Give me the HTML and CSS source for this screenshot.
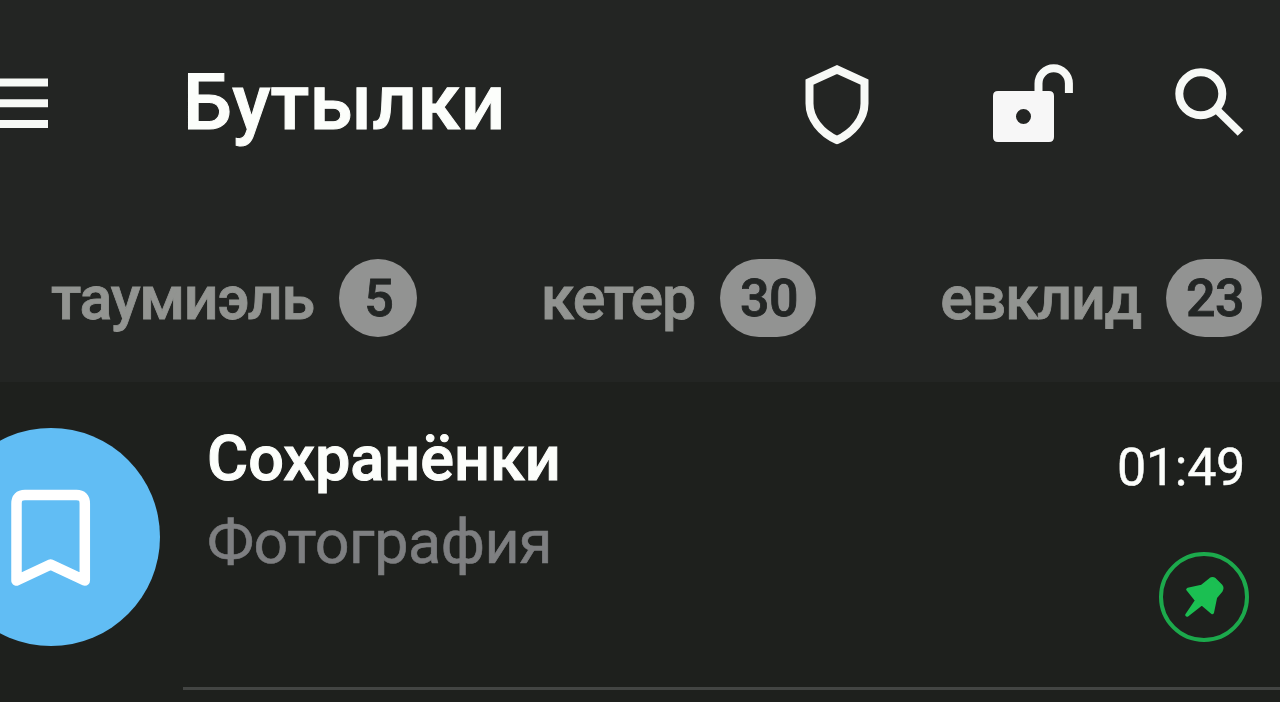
FILE: index.html
```
<!DOCTYPE html>
<html lang="ru">
<head>
  <meta charset="UTF-8">
  <title>Бутылки</title>
  <link rel="stylesheet" href="styles.css">
</head>
<body>

  <header class="topbar">
    <svg class="menu-icon" width="48" height="52" viewBox="0 0 48 52">
      <path d="M0 5.500H48M0 26.200H48M0 46.900H48"/>
    </svg>
    <h1>Бутылки</h1>
    <svg class="shield-icon" width="64" height="80" viewBox="0 0 64 80">
      <path d="M32 4.500L59.500 17V38.500C59.500 53.500 48 68 32 75C16 68 4.500 53.500 4.500 38.500V17Z"/>
    </svg>
    <svg class="lock-icon" width="82" height="80" viewBox="0 0 82 80">
      <path class="shackle" d="M46.500 32V19.500A15.200 15.200 0 0 1 76.900 19.500V29"/>
      <path class="body" fill-rule="evenodd" d="M5 27H57Q62 27 62 32V73Q62 78 57 78H6Q1 78 1 73V32Q1 27 6 27ZM31.500 45A7.500 7.500 0 1 0 31.500 60A7.500 7.500 0 1 0 31.500 45Z"/>
    </svg>
    <svg class="search-icon" width="70" height="70" viewBox="0 0 70 70">
      <circle cx="26.800" cy="25.800" r="21.500"/>
      <path d="M42.500 41.500L66.500 65"/>
    </svg>
  </header>

  <nav class="tabs">
    <div class="tab">таумиэль <span class="count">5</span></div>
    <div class="tab">кетер <span class="count">30</span></div>
    <div class="tab">евклид <span class="count">23</span></div>
  </nav>

  <main class="chat">
    <div class="avatar">
      <svg width="80" height="98" viewBox="0 0 80 98">
        <path d="M14 7H65.500Q73.800 7 73.800 15.500V92.500L39.600 76.500L5.500 92.500V15.500Q5.500 7 14 7Z"/>
      </svg>
    </div>
    <div class="content">
      <div class="text">
        <div class="name">Сохранёнки</div>
        <div class="message">Фотография</div>
      </div>
      <div class="info">
        <div class="time">01:49</div>
        <div class="pin">
          <svg width="40" height="42" viewBox="0 0 40 42">
            <path d="M4 13.500L17.700 10.500L26.500 3.500Q28.500 2 30.500 3.500L37 10Q38.500 12 37 14.500L31.500 21L28.300 36.500L17.700 27.500L3 39L12.800 24.500Z"/>
          </svg>
        </div>
      </div>
    </div>
  </main>

</body>
</html>
```
FILE: styles.css
```
* {
  box-sizing: border-box;
}

body {
  margin: 0;
  height: 702px;
  overflow: hidden;
  background: #1e201d;
  color: #fcfefb;
  font-family: Roboto, "Noto Sans", sans-serif;
}

svg {
  display: block;
  flex: none;
  fill: none;
  stroke: #f7f9f6;
}

.topbar {
  display: flex;
  align-items: center;
  height: 206px;
  padding-right: 36px;
  background: #232523;
}

.topbar h1 {
  margin: 0 auto 0 135px;
  font-size: 78px;
  font-weight: 500;
  letter-spacing: 0.2px;
  line-height: 92px;
  -webkit-text-stroke: 1px;
}

.menu-icon {
  stroke-width: 8;
}

.shield-icon {
  margin: 4px 123px 0 0;
  stroke-width: 8;
}

.lock-icon {
  margin: 2px 100px 0 0;
  stroke-width: 8;
}

.lock-icon .body {
  fill: #f7f7f7;
  stroke: none;
}

.search-icon {
  stroke-width: 8;
}

.tabs {
  display: flex;
  justify-content: space-between;
  height: 176px;
  padding: 7px 18px 0 51px;
  background: #232523;
}

.tab {
  display: flex;
  align-items: center;
  gap: 25px;
  color: #929491;
  font-size: 61px;
  font-weight: 500;
  letter-spacing: -1.3px;
  -webkit-text-stroke: 0.8px;
}

.count {
  min-width: 78px;
  height: 78px;
  padding: 1px 18px 0 20px;
  border-radius: 39px;
  background: #929392;
  color: #232625;
  font-size: 52px;
  letter-spacing: -0.5px;
  line-height: 78px;
  text-align: center;
}

.chat {
  display: flex;
  height: 320px;
}

.avatar {
  display: flex;
  flex: none;
  align-items: center;
  justify-content: center;
  width: 218px;
  height: 218px;
  margin: 46px 23px 0 -58px;
  border-radius: 50%;
  background: #61bdf4;
}

.avatar svg {
  stroke: #fff;
  stroke-width: 10.500;
  stroke-linejoin: round;
}

.content {
  display: flex;
  flex: 1;
  justify-content: space-between;
  height: 308px;
  padding: 35px 31px 0 24px;
  border-bottom: 3px solid #434543;
}

.name,
.message {
  line-height: 83px;
}

.name {
  font-size: 63px;
  font-weight: 500;
  -webkit-text-stroke: 1px;
}

.message {
  margin-top: 1px;
  color: #7e7f81;
  font-size: 61px;
  letter-spacing: -0.5px;
  -webkit-text-stroke: 0.6px;
}

.info {
  display: flex;
  flex-direction: column;
  align-items: flex-end;
}

.time {
  margin: 19px 4px 52px 0;
  font-size: 52px;
  letter-spacing: -0.3px;
  line-height: 64px;
  -webkit-text-stroke: 0.5px;
}

.pin {
  display: flex;
  align-items: center;
  justify-content: center;
  width: 90px;
  height: 90px;
  border: 4px solid #1ca94c;
  border-radius: 50%;
}

.pin svg {
  fill: #1bbf52;
  stroke: #1bbf52;
  stroke-width: 3.500;
  stroke-linejoin: round;
}
```
